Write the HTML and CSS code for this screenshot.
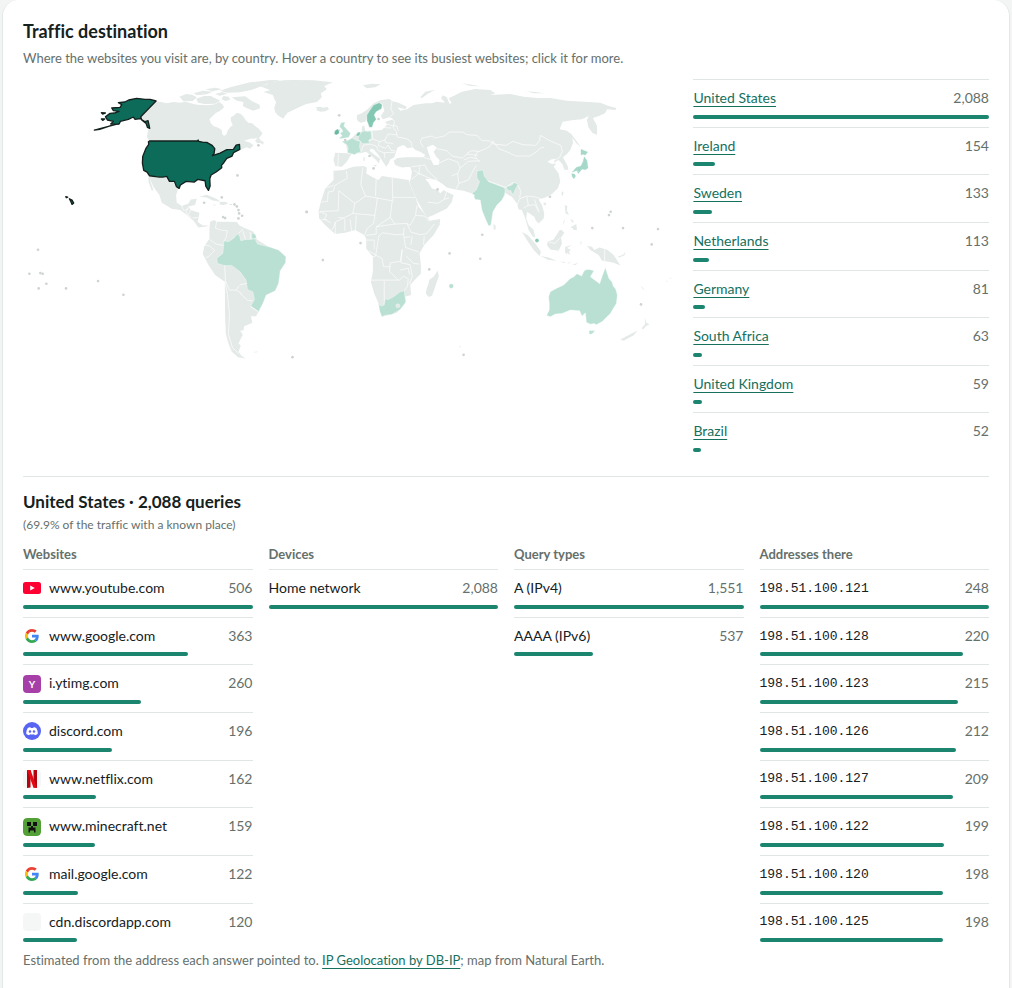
FILE: index.html
```html
<!DOCTYPE html>
<html lang="en">
<head>
<meta charset="utf-8">
<meta name="viewport" content="width=device-width, initial-scale=1">
<title>Traffic destination</title>
<link rel="stylesheet" href="styles.css">
</head>
<body>
<main class="card">
<h2 class="title">Traffic destination</h2>
<p class="lead">Where the websites you visit are, by country. Hover a country to see its busiest websites; click it for more.</p>
<div class="overview">
<svg class="map" viewBox="23 79 650 290" role="img" aria-label="World map of traffic by country">
<!-- North America -->
<g transform="translate(20 70) scale(.33333)">
<path class="land" d="M408 93L440 100 460 96 480 98 495 95 530 104 565 106 585 103 598 96 608 104 612 112 600 122 586 130 568 148 572 160 580 168 596 174 605 180 606 191 612 198 620 192 622 182 630 172 638 165 632 152 632 142 640 138 650 128 662 132 670 140 678 152 685 158 696 160 705 168 716 176 727 190 722 198 715 205 690 206 672 212 690 218 700 226 690 236 680 232 660 240 658 223 648 225 640 238 600 249 577 257 584 236 560 217 534 213 388 213 380 200 386 175 375 155 362 140z"/>
<path class="land" d="M705 212l10-10 8 10 8 4-2 8-8-5-10 1zM478 80l20-8 18 2 14 8-12 11-28 1zM528 86l24-8 20 0 28 14-14 9-32 1-20-4zM520 70l28-8 30 3-18 8-30 3zM556 58l30-5 20 5-30 6zM600 62l30-10 60-15 60-7h30l-35 10-30 12-22 8-33 7-40 1zM635 82l40-3 20 14 23 11 2 11-20 7-22-8-10-6 2-12-20-4zM610 78l16 2 4 9-14 4-12-6zM585 72l22-6 14 5-22 6z"/>
<path class="land" d="M385 318l27 6 25-4 8 15h15l6 17 8 5-6 18 2 23 15 10 20-8 7-12 18-2-5 19-20 4 7 11 26 8-5 28 15 10h20l-13 4-20 2-15-20-20-17-20-15-25-4-30-18-7-23-18-25-8-18-4-7 12 35-5 2-10-27z"/>
<path class="land" d="M538 380l22-6 30 13 12 8-24-4-18-9zM600 396l16-1 8 6-14 4-12-2zM578 403l10 1-5 3zM628 402h8v3h-8z"/>
<path class="line" d="M485 408l6 14 14-6M505 410l-8 20 16 12M512 420l-8 14M518 444l16-2"/>
<path class="picked" d="M408 93l-18-5-15 0-25-3-24 5-12 6-19 2 10 6-5 8-25 2 5 8 17 2-14 5-13 1-14 10 6 10 18 4-8 8 16 1-65 17 16-2 44-15 14-1 4-8 24-6 15-7 5 7 16-2 14 9 9-3 5 23-7-3-4-12-13-10-3-10zM244 128l12 1-8 3zM244 147l10 0-6 4z"/>
<path class="picked" d="M385 215l3-2h144l2-3 2 4 14 3h10l16 9 8 10-2 14-5 7 23-8 20-10 20-1 8-13 10-2 1 15-19 10-4 10-16 7-9 13-7 8 1 7-17 13-15 9-4 11 1 22-5 13-8-13-2-16-22-4-10 8-25-2-17 11-4 10-8-5-6-16h-15l-8-15-12 2-11 0-29-4-7-11-10-5-4-22 1-20 10-25 8-11z"/>
<path class="picked" d="M137 380l6 1-4 2zM148 386l8 4 5 9-5 4-3-7z"/>
</g>
<!-- Greenland and Iceland -->
<g transform="translate(200 70) scale(.33333)">
<path class="land" d="M178 48l20-4 12-8 40-5 30-1 60 1 58 6-26 11 8 10-18 12 3 12-15 14-32 6-28 13-28 13-8 10-4 8-14-8-10-10-4-13 6-20-4-4-6-16-28-9 20-6zM346 112l16-2 6 3 14-2 5 7-12 6-13 1-14-4 4-4z"/>
</g>
<!-- South America -->
<g transform="translate(20 200) scale(.33333)">
<path class="land" d="M570 65l12-5 8 5 30 0 30 1 8 10 12 6 30 13 10 23 35 22 30 10 22 20-1 18-16 24-5 38-10 22-27 13-10 25-13 25-7 13h-16l5 20-25 10-2 12-10 2 8 12-6 12-7 14 7 6-7 19 10 13 13 7-23-3-20-17-10-25-8-30-2-50-1-105-29-20-20-30-17-33 4-22 16-25v-30zM699 456l14-3-4 4z"/>
<path class="hot1" d="M612 122l13 3 15-10 12-13 6 4 4 16 14-4 14 0 14-3 8 17 33 8 30 10 22 20-1 18-16 24-5 38-10 22-27 13-10 25-13 25-11-9-12-8 11-20-5-23-16-7-4-28-18-25-25-19h-23l-20-6-2-15 18-15zM695 98l11 6 3 8-8 5-6-1z"/>
<path class="line" d="M590 62l-4 22 16 6 20 2-4 20-6 10M552 135l16 2 16 14M568 118l20 14 22 4M584 151l-18 18-10 4M614 196l2 46M616 242l12 28 20 0 16 10M660 254l20-4M648 270l10-14M660 280l22 20 14 2M614 242l8 40 6 60-3 60 12 40 18 18M656 100l12-14M676 118l-8-26M692 118l-2-22M692 320l22 14"/>
</g>
<!-- Europe and Asia -->
<g transform="translate(310 70) scale(.33333)">
<path class="land" d="M240 92L265 98 290 110 285 118 262 112 270 122 290 118 310 105 345 100 365 100 380 95 405 98 392 85 398 76 410 82 418 102 424 98 415 85 430 78 455 65 495 57 540 60 555 70 540 75 600 72 640 80 680 84 720 84 770 92 820 95 870 98 895 108 918 114 916 120 890 118 884 130 866 138 848 144 860 168 860 195 846 188 834 172 830 150 835 138 815 148 790 150 757 155 748 178 770 182 785 195 788 220 780 240 770 252 758 262 772 288 774 300 762 298 756 282 745 270 730 278 735 266 722 268 711 275 725 282 738 280 730 290 745 310 750 335 742 355 725 372 705 382 685 388 695 405 702 430 700 445 685 460 677 452 672 440 660 432 650 425 648 445 655 465 670 480 675 502 668 500 655 480 645 445 635 420 625 418 620 400 605 380 590 372 560 352 520 345 500 368 485 370 460 362 435 358 410 352 395 340 375 328 345 326 355 338 365 355 382 360 390 370 400 360 415 368 430 375 425 395 410 415 370 435 352 442 340 425 320 390 303 350 298 336 302 325 305 305 300 290 275 292 255 285 250 272 262 264 285 262 310 262 340 262 345 255 330 245 315 240 308 232 292 235 280 225 262 232 258 245 252 262 240 268 235 280 228 290 218 275 205 255 190 238 182 236 178 242 195 256 210 266 205 280 198 270 180 255 168 245 150 250 125 252 120 258 110 275 95 290 75 288 70 270 75 248 112 250 108 225 95 215 120 208 140 190 155 185 155 170 162 166 165 182 185 182 215 180 230 165 225 155 250 148 236 142 218 148 212 138 222 122 216 100z"/>
<path class="sea" d="M350 232l18-8 12 9-10 12 8 15 10 10-3 15-15 0-8-17-7-18z"/>
<path class="land" d="M140 135l15-5 17-12 18-18 22-10 26-3 7 6-30 8-15 0-20 24-8 15-7 15-15 3-10-8zM158 46l27-5 27 2-17 9-25 3zM330 82l15-17 30-6-22 12-18 14zM455 40l30 4 25 5-30-1zM648 64l27 2 27 4-32 0zM778 186l14 18 20 28-14-12-16-22zM700 398l8 0-2 8-6-2zM755 364l5 2-3 12-4-6zM550 462l6 5 0 11-6 0zM188 285l12 0-3 5zM160 260l4 3-1 10-4-1zM236 300l14 2M284 303l10-4z"/>
<path class="line" d="M245 95l-3 22 8 14-12 12 15 10-4 20 10 12 2 16 28 5 14 10 2 14M185 183l3 24 20 8 16-5 10-18 26 2M188 207l-14 6M208 215l-4 12 22 8 8-10 8 16 14 2M224 210l2 8 22 2M178 222l20 6 6 14M152 245l8-20 18-2M204 242l18 6 2 16M222 248l32-1M112 250l20 3M85 250l-2 38M216 160l24 4M213 172l30 2M240 166l20 2 4 14"/>
<path class="line" d="M340 232l-10-16 6-12 30-6 8 6 28-6 16-12 40 0 12 8 30 2 16 16 20 0 14 10 38 4 20-12 30 10 38 2 12-14 2-16 32 18 30 12 4 18-8 18-14 8M550 212l-10 16-14 8-24 10-8 14 16 16M546 212l20 24 30 12 20 10 42 0 20-12 12-12 12-2M380 236l30 6 16 16 30 6 14-12 32 4M340 262l28 8M386 280l28-14 28 10 8 18-8 16-18 8M450 294l24-20 34-2M442 310l4 30-8 16M446 340l28-10 16-30 8-14M344 285l8 16 20 20 10 8M344 285l-40 5M328 290l-2 20-22 18M326 310l40 18M352 396l30 4 20-12 14-4M402 388l8-26M310 300l20 14M500 300l12 20M520 328l66 24 22-14 16 8 8 20-4 16M628 386l22-8 22 2 20 6M628 386l-8 20M650 380l4 26 20-2 12 22M654 406l-14 8M672 388l14 36M470 250l14-8 22 2M460 270l20-8 20 4"/>
<path class="hot1" d="M500 303l18-3 4 18 13 17 45 17 5 6-2 17-8 15-15 15-12 20-3 20-3 20-7 3-10-23-10-25-5-30-15-2-4-8 2-4-8-6 13-10 10-25-8-12zM588 350l17-5 7-8 11 6-8 15-7 17-6-13-10-2z"/>
<path class="hot2" d="M207 98l9 6-2 12-16 9-6 10 6 13-8 10-4 14h-9l-3-10-4-10v-17l8-13 12-17z"/>
<path class="hot3" d="M74 182l8-5 5 4 0 9-8 5-7-3z"/>
<path class="hot1" d="M92 158l13-2-4 12 11 12 9 10-5 12-24 4-6-1 10-8-6-7 8-6-3-6-7-8zM86 178l5 1-1 4-4-1zM95 214l17-2 14-8 14 8 10 2-2 16 4 15-14 5-4 4-22-6 2-14-4-10zM155 185l10-3 4 3 13-2 2 22-9 6 4 8-21 2-8-8-6-5 2-12z"/>
<path class="hot2" d="M137 196l6-9 8-1-2 9-6 4z"/>
<path class="japan" d="M812 238l10 4 10 4-7 9-8-2-5 2zM822 260l8 12 3 22-8 5-9-2-8 8-8-4-14 5 12-14 14-4 6-12zM784 311l8 1 4 6-5 8-5-6zM800 304l9 0-5 6z"/>
<circle class="dot" cx="87" cy="136" r="4"/><circle class="dot" cx="205" cy="147" r="4"/><circle class="dot" cx="105" cy="210" r="4"/><circle class="dot" cx="178" cy="258" r="4"/><circle class="dot" cx="719" cy="380" r="4"/>
</g>
<!-- Africa -->
<g transform="translate(300 150) scale(.33333)">
<path class="land" d="M100 62l30-2 30-10 30-2 10 4-2 18 17 10 20 10 10-12 30 4 26 4 24 4 5 15 15 35 10 30 30 35 3 7 32-5-2 18-18 30-28 30-14 25 4 35v25l-16 17-16 18 3 30-18 5v20l-25 28-45 12-10-40-13-30-10-35 6-30v-45l-20-25v-30l-6-10-27-15-30 8-30 4-30-27-18-20-2-20 7-30 13-40 25-25z"/>
<path class="land" d="M412 361l4 17-8 22-8 24-5 13-9 4-9-10 2-14 6-16 2-12 14-10z"/>
<path class="line" d="M138 62l4 22-38 22-4 16M116 122l48 38 32-22-14-34 6-52M116 122l-2 60-50 2-8 4M100 106l-24 8M64 156l18-2 2-28 18-4M196 138l80 14M276 82l2 72M278 142h66M228 80l-2 58M164 160l-6 30-28 14-16-2M130 204l-22 10-12 26M104 216l2 36M134 206l0 36M150 208l4 36M168 196l-2 44M158 190l66 6-4 24-20 16-6 18M224 196l8-54M276 152l-6 50-42 28 0 22-30 4M270 202l14 20 36-2 10 6 16-30 4-30M228 230l56-8M236 258l10-10 42 6 22-2 2-20M320 220l12 26 28 8 20-4 22-28M346 196l28 2 14 16M310 252l6 40 40 14M336 258l-4 26M372 258l-2 26M312 262l18-2M236 258l-10 60-8 2M198 270h24l0 28M206 302l26 16 14 8 4 24 20 0M306 298l-6 36-30 4-2 28M306 298l-4 40 28 6M212 390h60l26 0 12-12M252 392l0 76M270 366l24 24M300 360l24-6 4 20M318 318l22 22 18 2M330 344l6 34-8 24M310 378l14 8-2 22-10 14M60 184l20 10-8 14 20 10M60 210l20-2"/>
<path class="hot1" d="M235 462l8 6 9-3 3-20 8 4 17-9 20-15 12-3 2 16 3 17-17 23-25 15-20 2-10 5-6-15z"/>
<circle class="spot" cx="293" cy="467" r="6"/>
<circle class="dot" cx="19" cy="185" r="4"/><circle class="dot" cx="181" cy="279" r="4"/><circle class="dot" cx="68" cy="330" r="4"/><circle class="dot" cx="448" cy="310" r="4"/><circle class="dot" cx="387" cy="358" r="4"/><circle class="dot" cx="412" cy="118" r="4"/><circle class="dot" cx="220" cy="55" r="4"/><circle class="dot" cx="490" cy="614" r="4"/>
<path class="land" d="M475 590l6-2 1 4z"/>
<circle class="hot1" cx="453" cy="408" r="7"/>
</g>
<!-- Southeast Asia and Oceania -->
<g transform="translate(470 150) scale(.33333)">
<path class="land" d="M283 165l8 3-1 14 6 13-10-5zM300 232l10-6 8-4 2 18-10 0-3-6zM300 205l10 8-4 6zM284 210l-6 16 2-14zM155 246l17 9 23 25 17 25-4 13-18-18-20-30zM210 318l25 4 25 10-25-2zM268 334l18 2-4 3zM290 338l14-1-10 3zM305 345l20-8-10 8zM232 275l18-7 18-28 6 0 8 8-10 14 3 18-10 22-25-4-10-13zM285 290l20-5-15 9 12 6-6 5 4 10-10-7-2 7-4-10zM330 272l4 4-2 12zM350 288l15 2 7 10 16-8 24 8 18 15 20 31-20-8-15-3-20-3-10-17-25-15zM442 320l16-6 8-10-4 12-16 6zM450 568l30-16 22-11-12 14-30 17zM523 502l5 16 9 4-10 6-9 10-4-4 10-12zM510 407l5 4 8 9-4-1zM530 374l3 8zM585 394l6-3 0 4zM598 384l6-1-3 4zM478 318l8 4zM495 328l10 6z"/>
<path class="line" d="M403 298v36M236 276l18 4 16-18"/>
<path class="hot1" d="M405 352l5 16 6 17 10 12 2 10 8 10 5 18-3 25-18 30-25 25-5 2-12 7-6-4-12 2-12-6-1-12-2-16-10 10-7-16-28-2-25 10-20 2-15 8-11-4 8-16v-20l-2-20 5-15 18-10 22-10 20-20 10-4 10-10 14 7 6-13 6-6 11-1 14 4-11 18 16 12 12 9 6-18zM357 540l8 2 9-2-6 9-8 4-4-4z"/>
<circle class="dot" cx="36" cy="254" r="4"/><circle class="dot" cx="30" cy="326" r="4"/><circle class="dot" cx="366" cy="234" r="4"/><circle class="dot" cx="458" cy="234" r="4"/><circle class="dot" cx="421" cy="185" r="4"/><circle class="dot" cx="416" cy="195" r="4"/><circle class="dot" cx="563" cy="237" r="4"/><circle class="dot" cx="544" cy="283" r="4"/><circle class="dot" cx="512" cy="463" r="4"/>
<circle class="hot2" cx="200" cy="271" r="6"/>
</g>
<!-- Atlantic and Pacific islands -->
<g class="dot" transform="translate(20 200) scale(.33333)">
<circle cx="54" cy="149" r="4"/><circle cx="28" cy="221" r="4"/><circle cx="61" cy="219" r="4"/><circle cx="68" cy="221" r="4"/><circle cx="79" cy="251" r="4"/><circle cx="56" cy="265" r="4"/><circle cx="138" cy="265" r="4"/><circle cx="234" cy="243" r="4"/><circle cx="310" cy="284" r="4"/><circle cx="817" cy="471" r="4"/><circle cx="860" cy="36" r="4"/><circle cx="552" cy="8" r="4"/><circle cx="643" cy="13" r="4"/><circle cx="650" cy="19" r="4"/><circle cx="655" cy="30" r="4"/><circle cx="657" cy="40" r="4"/><circle cx="666" cy="47" r="4"/><circle cx="655" cy="55" r="4"/><circle cx="609" cy="51" r="4"/><circle cx="615" cy="54" r="4"/><circle cx="652" cy="-74" r="4"/><circle cx="605" cy="-8" r="4"/><circle cx="715" cy="-164" r="4"/>
</g>
</svg>
<ul class="list">
<li class="row"><a class="name" href="#us">United States</a><span class="num">2,088</span><span class="bar" style="width:100%"></span></li>
<li class="row"><a class="name" href="#ie">Ireland</a><span class="num">154</span><span class="bar" style="width:7.4%"></span></li>
<li class="row"><a class="name" href="#se">Sweden</a><span class="num">133</span><span class="bar" style="width:6.4%"></span></li>
<li class="row"><a class="name" href="#nl">Netherlands</a><span class="num">113</span><span class="bar" style="width:5.4%"></span></li>
<li class="row"><a class="name" href="#de">Germany</a><span class="num">81</span><span class="bar" style="width:3.9%"></span></li>
<li class="row"><a class="name" href="#za">South Africa</a><span class="num">63</span><span class="bar" style="width:3%"></span></li>
<li class="row"><a class="name" href="#gb">United Kingdom</a><span class="num">59</span><span class="bar" style="width:2.8%"></span></li>
<li class="row"><a class="name" href="#br">Brazil</a><span class="num">52</span><span class="bar" style="width:2.5%"></span></li>
</ul>
</div>
<section class="detail">
<h3 class="subtitle">United States · 2,088 queries</h3>
<p class="share">(69.9% of the traffic with a known place)</p>
<div class="columns">
<div>
<h4 class="heading">Websites</h4>
<ul class="list">
<li class="row"><span class="name"><svg class="icon" viewBox="0 0 18 18"><rect y="3" width="18" height="12" rx="2.5" fill="#f03"/><path d="M7.2 6.4v5.2L11.8 9z" fill="#fff"/></svg>www.youtube.com</span><span class="num">506</span><span class="bar" style="width:100%"></span></li>
<li class="row"><span class="name"><svg class="icon google" viewBox="0 0 48 48"><path fill="#ea4335" d="M24 9.500c3.500 0 6.700 1.200 9.200 3.600l6.900-6.900C35.900 2.400 30.500 0 24 0 14.600 0 6.500 5.400 2.600 13.200l8 6.200C12.400 13.700 17.700 9.500 24 9.500z"/><path fill="#4285f4" d="M47 24.500c0-1.600-.2-3.100-.4-4.500H24v9h12.900c-.6 3-2.300 5.500-4.800 7.200l7.700 6c4.500-4.200 7.200-10.400 7.200-17.700z"/><path fill="#fbbc05" d="M10.500 28.600a14.500 14.500 0 0 1 0-9.200l-8-6.200a24 24 0 0 0 0 21.600z"/><path fill="#34a853" d="M24 48c6.500 0 11.900-2.100 15.900-5.800l-7.700-6c-2.200 1.500-4.900 2.300-8.200 2.300-6.300 0-11.600-4.200-13.500-9.900l-8 6.200C6.500 42.600 14.600 48 24 48z"/></svg>www.google.com</span><span class="num">363</span><span class="bar" style="width:71.7%"></span></li>
<li class="row"><span class="name"><span class="icon letter">Y</span>i.ytimg.com</span><span class="num">260</span><span class="bar" style="width:51.4%"></span></li>
<li class="row"><span class="name"><svg class="icon" viewBox="0 0 18 18"><circle cx="9" cy="9" r="9" fill="#5865f2"/><path fill="#fff" d="M7.300 5.100c-1 .2-1.900.5-2.500.9-1.200 1.900-1.700 4-1.500 6 .9.700 1.800 1.100 2.900 1.300l.7-1.100c1.400.4 2.800.4 4.200 0l.7 1.100c1.100-.2 2-.6 2.900-1.300.2-2.200-.3-4.200-1.500-6-.6-.4-1.500-.7-2.500-.9l-.4.800H7.700z"/><circle cx="7" cy="9.500" r="1.200" fill="#5865f2"/><circle cx="11" cy="9.500" r="1.200" fill="#5865f2"/></svg>discord.com</span><span class="num">196</span><span class="bar" style="width:38.7%"></span></li>
<li class="row"><span class="name"><svg class="icon blank" viewBox="0 0 18 18"><path fill="#b1060f" d="M4 0h3.500v17.500L4 18zM10.500 0H14v18l-3.500-.5z"/><path fill="#e50914" d="M4 0h3.500L14 18l-3.600-.5z"/></svg>www.netflix.com</span><span class="num">162</span><span class="bar" style="width:32%"></span></li>
<li class="row"><span class="name"><svg class="icon" viewBox="0 0 18 18"><rect width="18" height="18" rx="4" fill="#53a136"/><path fill="#111" d="M4 4h4v4H4zM10 4h4v4h-4zM8 8h2v1.500h2.500V14.500H11V12.500H7V14.500H5.500V9.500H8z"/></svg>www.minecraft.net</span><span class="num">159</span><span class="bar" style="width:31.4%"></span></li>
<li class="row"><span class="name"><svg class="icon google" viewBox="0 0 48 48"><path fill="#ea4335" d="M24 9.500c3.500 0 6.700 1.200 9.200 3.600l6.900-6.900C35.900 2.400 30.500 0 24 0 14.600 0 6.500 5.400 2.600 13.200l8 6.200C12.400 13.700 17.700 9.500 24 9.500z"/><path fill="#4285f4" d="M47 24.500c0-1.600-.2-3.100-.4-4.500H24v9h12.900c-.6 3-2.300 5.500-4.800 7.200l7.700 6c4.500-4.200 7.200-10.400 7.200-17.700z"/><path fill="#fbbc05" d="M10.500 28.600a14.500 14.500 0 0 1 0-9.200l-8-6.200a24 24 0 0 0 0 21.600z"/><path fill="#34a853" d="M24 48c6.500 0 11.900-2.100 15.900-5.800l-7.700-6c-2.200 1.500-4.900 2.300-8.200 2.300-6.300 0-11.600-4.200-13.500-9.900l-8 6.200C6.500 42.600 14.600 48 24 48z"/></svg>mail.google.com</span><span class="num">122</span><span class="bar" style="width:24.1%"></span></li>
<li class="row"><span class="name"><span class="icon blank"></span>cdn.discordapp.com</span><span class="num">120</span><span class="bar" style="width:23.7%"></span></li>
</ul>
</div>
<div>
<h4 class="heading">Devices</h4>
<ul class="list">
<li class="row"><span class="name">Home network</span><span class="num">2,088</span><span class="bar" style="width:100%"></span></li>
</ul>
</div>
<div>
<h4 class="heading">Query types</h4>
<ul class="list">
<li class="row"><span class="name">A (IPv4)</span><span class="num">1,551</span><span class="bar" style="width:100%"></span></li>
<li class="row"><span class="name">AAAA (IPv6)</span><span class="num">537</span><span class="bar" style="width:34.6%"></span></li>
</ul>
</div>
<div>
<h4 class="heading">Addresses there</h4>
<ul class="list">
<li class="row"><code class="name">198.51.100.121</code><span class="num">248</span><span class="bar" style="width:100%"></span></li>
<li class="row"><code class="name">198.51.100.128</code><span class="num">220</span><span class="bar" style="width:88.7%"></span></li>
<li class="row"><code class="name">198.51.100.123</code><span class="num">215</span><span class="bar" style="width:86.7%"></span></li>
<li class="row"><code class="name">198.51.100.126</code><span class="num">212</span><span class="bar" style="width:85.5%"></span></li>
<li class="row"><code class="name">198.51.100.127</code><span class="num">209</span><span class="bar" style="width:84.3%"></span></li>
<li class="row"><code class="name">198.51.100.122</code><span class="num">199</span><span class="bar" style="width:80.2%"></span></li>
<li class="row"><code class="name">198.51.100.120</code><span class="num">198</span><span class="bar" style="width:79.8%"></span></li>
<li class="row"><code class="name">198.51.100.125</code><span class="num">198</span><span class="bar" style="width:79.8%"></span></li>
</ul>
</div>
</div>
<p class="note">Estimated from the address each answer pointed to. <a href="#db-ip">IP Geolocation by DB-IP</a>; map from Natural Earth.</p>
</section>
</main>
</body>
</html>
```
FILE: styles.css
```css
* {
  box-sizing: border-box;
}

body {
  margin: 0;
  padding: 0 2px;
  background: #f3f5f4;
  color: #15211e;
  font: 14px/1.618 Lato, "Open Sans", sans-serif;
  font-variant-ligatures: none;
}

h2, h3, h4, p, ul {
  margin: 0;
}

.card {
  min-height: 100vh;
  padding: 19px 20px;
  border: 1px solid #e2e8e5;
  border-width: 0 1px;
  border-radius: 16px 16px 0 0;
  background: #fff;
}

.title {
  font-size: 18px;
  line-height: 24px;
}

.lead {
  margin: 4px 0 10px;
  color: #65706c;
  font-size: 13px;
  line-height: 22px;
}

.overview {
  display: grid;
  grid-template-columns: 11fr 5fr;
  gap: 20px;
  align-items: start;
}

.map {
  display: block;
  width: 100%;
}

.hot1,
.hot2,
.hot3,
.spot {
  stroke: #fff;
  stroke-width: 1;
  stroke-linejoin: round;
}

.land, .spot { fill: #e4eae7; }
.hot1 { fill: #b9e0d3; }
.hot2 { fill: #84c7b2; }
.hot3 { fill: #6bb8a2; }
.sea { fill: #fff; }
.dot { fill: #cdd4d1; }

.japan {
  fill: #a5d8c8;
  stroke: #a5d8c8;
  stroke-width: 1;
}

.line {
  fill: none;
  stroke: #fff;
  stroke-width: 2;
  stroke-linejoin: round;
}

.picked {
  fill: #0c6b59;
  stroke: #15211e;
  stroke-width: 4;
  stroke-linejoin: round;
}

.list {
  padding: 0;
  list-style: none;
}

.row {
  display: grid;
  grid-template-columns: 1fr auto;
  row-gap: 5px;
  padding: 7px 0 8px;
  border-top: 1px solid #e0e6e3;
}

.name {
  display: flex;
  align-items: center;
  gap: 8px;
  justify-self: start;
}

a {
  color: #16705e;
  text-decoration: underline;
  text-underline-offset: 3px;
}

code {
  font-family: "Liberation Mono", monospace;
  font-size: 13px;
}

.num {
  color: #65706c;
}

.bar {
  grid-column: 1 / -1;
  height: 4px;
  border-radius: 2px;
  background: #1c8570;
}

.icon {
  width: 18px;
  height: 18px;
  border-radius: 4px;
}

.google {
  padding: 2px;
}

.letter {
  background: #a63fa8;
  color: #fff;
  font-size: 10px;
  font-weight: 700;
  line-height: 18px;
  text-align: center;
}

.blank {
  background: #f5f7f6;
}

.detail {
  margin-top: 16px;
  padding-top: 14px;
  border-top: 1px solid #e0e6e3;
}

.subtitle {
  font-size: 17px;
  line-height: 22px;
}

.share {
  margin-top: 2px;
  color: #65706c;
  font-size: 12px;
  line-height: 20px;
}

.columns {
  display: grid;
  grid-template-columns: repeat(4, 1fr);
  gap: 16px;
  margin-top: 10px;
}

.heading {
  margin-bottom: 6px;
  color: #65706c;
  font-size: 13px;
  line-height: 18px;
}

.note {
  color: #65706c;
  font-size: 13px;
  line-height: 20px;
}
```
